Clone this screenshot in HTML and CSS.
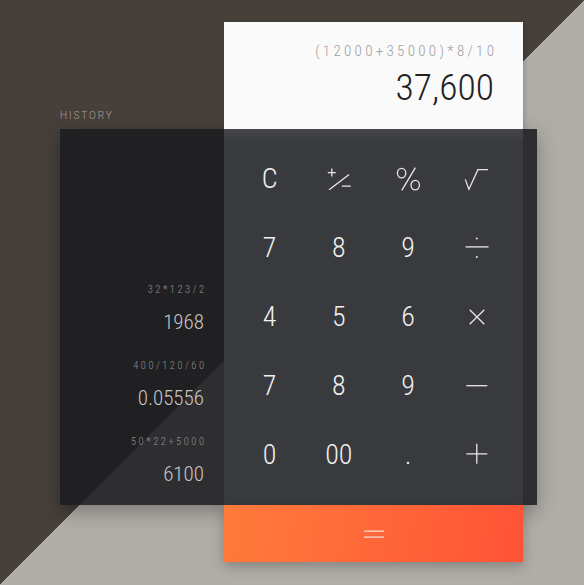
FILE: index.html
```html
<!DOCTYPE html>
<html lang="en">
<head>
<meta charset="utf-8">
<title>Calculator</title>
<link rel="stylesheet" href="styles.css">
</head>
<body>
<div class="scene">
  <div class="panel"></div>
  <div class="display">
    <div class="expr">(12000+35000)*8/10</div>
    <div class="result">37,600</div>
  </div>
  <div class="history-label">HISTORY</div>
  <div class="history">
    <div class="h-item">
      <div class="h-expr">32*123/2</div>
      <div class="h-result">1968</div>
    </div>
    <div class="h-item">
      <div class="h-expr">400/120/60</div>
      <div class="h-result">0.05556</div>
    </div>
    <div class="h-item">
      <div class="h-expr">50*22+5000</div>
      <div class="h-result">6100</div>
    </div>
  </div>
  <div class="keypad">
    <div class="key">C</div>
    <div class="key"><svg class="icon" viewBox="-13 -13 26 26"><path d="M-7.2 -10.4V-2.4M-11.2 -6.4H-3.2M-9.9 10.7L10.1 -4.6M2.8 7.1H11.8"/></svg></div>
    <div class="key"><svg class="icon" viewBox="-13 -13 26 26"><ellipse cx="-6.4" cy="-5.9" rx="4.2" ry="4.8"/><ellipse cx="7.2" cy="6.1" rx="4.2" ry="4.8"/><path d="M-6.2 11.4L7.4 -11.3"/></svg></div>
    <div class="key"><svg class="icon" viewBox="-13 -13 26 26"><path d="M-11.7 0.4L-8.1 10.4L0.9 -9.3H10.9"/></svg></div>
    <div class="key">7</div>
    <div class="key">8</div>
    <div class="key">9</div>
    <div class="key"><svg class="icon" viewBox="-13 -13 26 26"><path d="M-11.4 -1.1H11.6"/><circle class="dot" cx="-0.2" cy="-9.5" r="1"/><circle class="dot" cx="-0.2" cy="8.9" r="1"/></svg></div>
    <div class="key">4</div>
    <div class="key">5</div>
    <div class="key">6</div>
    <div class="key"><svg class="icon" viewBox="-13 -13 26 26"><path d="M-7.3 -7.3L7.3 7.3M7.3 -7.3L-7.3 7.3"/></svg></div>
    <div class="key">7</div>
    <div class="key">8</div>
    <div class="key">9</div>
    <div class="key"><svg class="icon" viewBox="-13 -13 26 26"><path d="M-10.7 -0.3H10.3"/></svg></div>
    <div class="key">0</div>
    <div class="key">00</div>
    <div class="key">.</div>
    <div class="key"><svg class="icon" viewBox="-13 -13 26 26"><path d="M-10.7 -1.2H10.3M-0.2 -11.2V8.8"/></svg></div>
  </div>
  <div class="equals"><svg class="eq-icon" viewBox="-12 -6 24 12"><path d="M-10 -2.8H10M-10 3.2H10"/></svg></div>
</div>
</body>
</html>
```

FILE: styles.css
```css
html, body {
  margin: 0;
  padding: 0;
}
body {
  width: 584px;
  height: 585px;
  overflow: hidden;
  background: linear-gradient(to bottom right, #463f3a 50%, #b0ada7 50%);
  font-family: "Roboto Condensed", Roboto, "Liberation Sans", sans-serif;
  font-weight: 300;
}
.scene {
  display: grid;
  grid-template-columns: 60px 164px 299px 14px 1fr;
  grid-template-rows: 22px 107px 376px 57px 1fr;
  height: 585px;
}
.panel {
  grid-column: 2 / 5;
  grid-row: 3;
  background: rgba(26, 27, 31, 0.87);
  box-shadow: 0 6px 18px rgba(0, 0, 0, 0.3);
}
.display {
  grid-column: 3;
  grid-row: 2;
  background: #fafafa;
  box-shadow: 2px 1px 4px rgba(0, 0, 0, 0.15);
  display: flex;
  flex-direction: column;
  align-items: flex-end;
  padding: 21px 29px 0 0;
}
.expr {
  font-size: 15px;
  line-height: 16px;
  letter-spacing: 3.3px;
  margin-right: -3.3px;
  color: #9e9e9e;
}
.result {
  margin-top: 8px;
  font-size: 37.5px;
  line-height: 41px;
  color: #212121;
}
.history-label {
  grid-column: 2;
  grid-row: 2;
  align-self: end;
  margin-bottom: 7px;
  font-family: Roboto, sans-serif;
  font-size: 10px;
  line-height: 12px;
  letter-spacing: 1.9px;
  color: #a8a29d;
}
.history {
  grid-column: 2;
  grid-row: 3;
  display: flex;
  flex-direction: column;
  justify-content: flex-end;
  align-items: flex-end;
  gap: 25px;
  padding: 0 20px 19px 0;
}
.h-item {
  display: flex;
  flex-direction: column;
  align-items: flex-end;
  gap: 13px;
}
.h-expr {
  font-size: 10.5px;
  line-height: 14px;
  letter-spacing: 2.5px;
  margin-right: -2.5px;
  color: #909090;
}
.h-result {
  font-size: 21px;
  line-height: 24px;
  color: #c6c6c6;
}
.keypad {
  grid-column: 3;
  grid-row: 3;
  background: linear-gradient(#45464a, #393a3e 14px);
  display: grid;
  grid-template-columns: repeat(4, 1fr);
  grid-template-rows: repeat(5, 1fr);
  padding: 15px 11px;
}
.key {
  display: flex;
  align-items: center;
  justify-content: center;
  font-size: 28px;
  line-height: 1;
  color: #f0f0f0;
}
.icon {
  width: 26px;
  height: 26px;
  fill: none;
  stroke: #e8e8e8;
  stroke-width: 1.3;
}
.icon .dot {
  fill: #e8e8e8;
  stroke: none;
}
.equals {
  grid-column: 3;
  grid-row: 4;
  background: linear-gradient(100deg, #ff7b3b, #ff5336);
  box-shadow: 0 4px 12px rgba(0, 0, 0, 0.25);
  display: flex;
  align-items: center;
  justify-content: center;
}
.eq-icon {
  width: 24px;
  height: 12px;
  fill: none;
  stroke: rgba(255, 255, 255, 0.8);
  stroke-width: 1.3;
}
```
